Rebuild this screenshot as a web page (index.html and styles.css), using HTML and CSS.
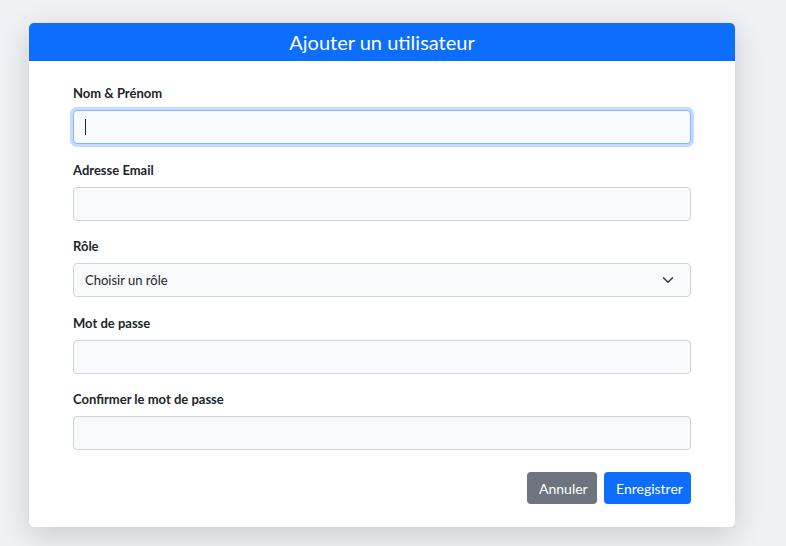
FILE: index.html
```html
<!DOCTYPE html>
<html lang="fr">
<head>
<meta charset="utf-8">
<title>Ajouter un utilisateur</title>
<link rel="stylesheet" href="styles.css">
</head>
<body>
<div class="page">
  <div class="card">
    <div class="card-header">Ajouter un utilisateur</div>
    <form class="card-body">
      <div class="group">
        <label class="label">Nom &amp; Prénom</label>
        <div class="field focused"><span class="caret"></span></div>
      </div>
      <div class="group">
        <label class="label">Adresse Email</label>
        <div class="field"></div>
      </div>
      <div class="group">
        <label class="label">Rôle</label>
        <div class="field select">
          <span>Choisir un rôle</span>
          <svg class="chev" width="16" height="16" viewBox="0 0 16 16"><path d="M2 5l6 6 6-6" fill="none" stroke="#343a40" stroke-width="2" stroke-linecap="round" stroke-linejoin="round"/></svg>
        </div>
      </div>
      <div class="group">
        <label class="label">Mot de passe</label>
        <div class="field"></div>
      </div>
      <div class="group">
        <label class="label">Confirmer le mot de passe</label>
        <div class="field"></div>
      </div>
      <div class="actions">
        <button type="button" class="btn btn-secondary">Annuler</button>
        <button type="button" class="btn btn-primary">Enregistrer</button>
      </div>
    </form>
  </div>
</div>
</body>
</html>
```
FILE: styles.css
```css
* { box-sizing: border-box; }
html, body { margin: 0; padding: 0; }
body {
  background: #f0f1f5;
  font-family: "Lato", "Noto Sans", sans-serif;
  color: #212529;
  width: 786px;
  height: 546px;
  overflow: hidden;
}
.page {
  padding: 23px 0 0 29px;
}
.card {
  width: 706px;
  background: #fff;
  border-radius: 5px;
  box-shadow: 0 8px 30px rgba(0, 0, 0, 0.16);
  overflow: hidden;
}
.card-header {
  height: 38px;
  background: #0d6efd;
  color: #fff;
  font-size: 20px;
  line-height: 38px;
  text-align: center;
}
.card-body {
  padding: 22px 44px 23px;
  display: flex;
  flex-direction: column;
}
.group {
  display: flex;
  flex-direction: column;
  margin-bottom: 15.5px;
}
.label {
  font-size: 13px;
  font-weight: 700;
  line-height: 20px;
  margin-bottom: 7px;
  color: #212529;
}
.field {
  position: relative;
  height: 34px;
  background: #f8f9fa;
  border: 1px solid #ced4da;
  border-radius: 4px;
}
.field.focused {
  border-color: #86b7fe;
  box-shadow: 0 0 0 3px rgba(13, 110, 253, 0.25);
}
.caret {
  position: absolute;
  left: 11px;
  top: 8px;
  width: 1px;
  height: 16px;
  background: #212529;
}
.select {
  display: flex;
  align-items: center;
  justify-content: space-between;
  padding: 0 16px 0 11px;
  font-size: 13px;
}
.chev { width: 12px; height: 12px; }
.actions {
  display: flex;
  justify-content: flex-end;
  gap: 7px;
  margin-top: 6.5px;
}
.btn {
  height: 32px;
  border: none;
  border-radius: 4px;
  color: #fff;
  font-family: inherit;
  font-size: 14px;
  padding: 0 12px;
}
.btn-secondary { background: #6c757d; width: 70px; }
.btn-primary { background: #0d6efd; width: 87px; }
```
